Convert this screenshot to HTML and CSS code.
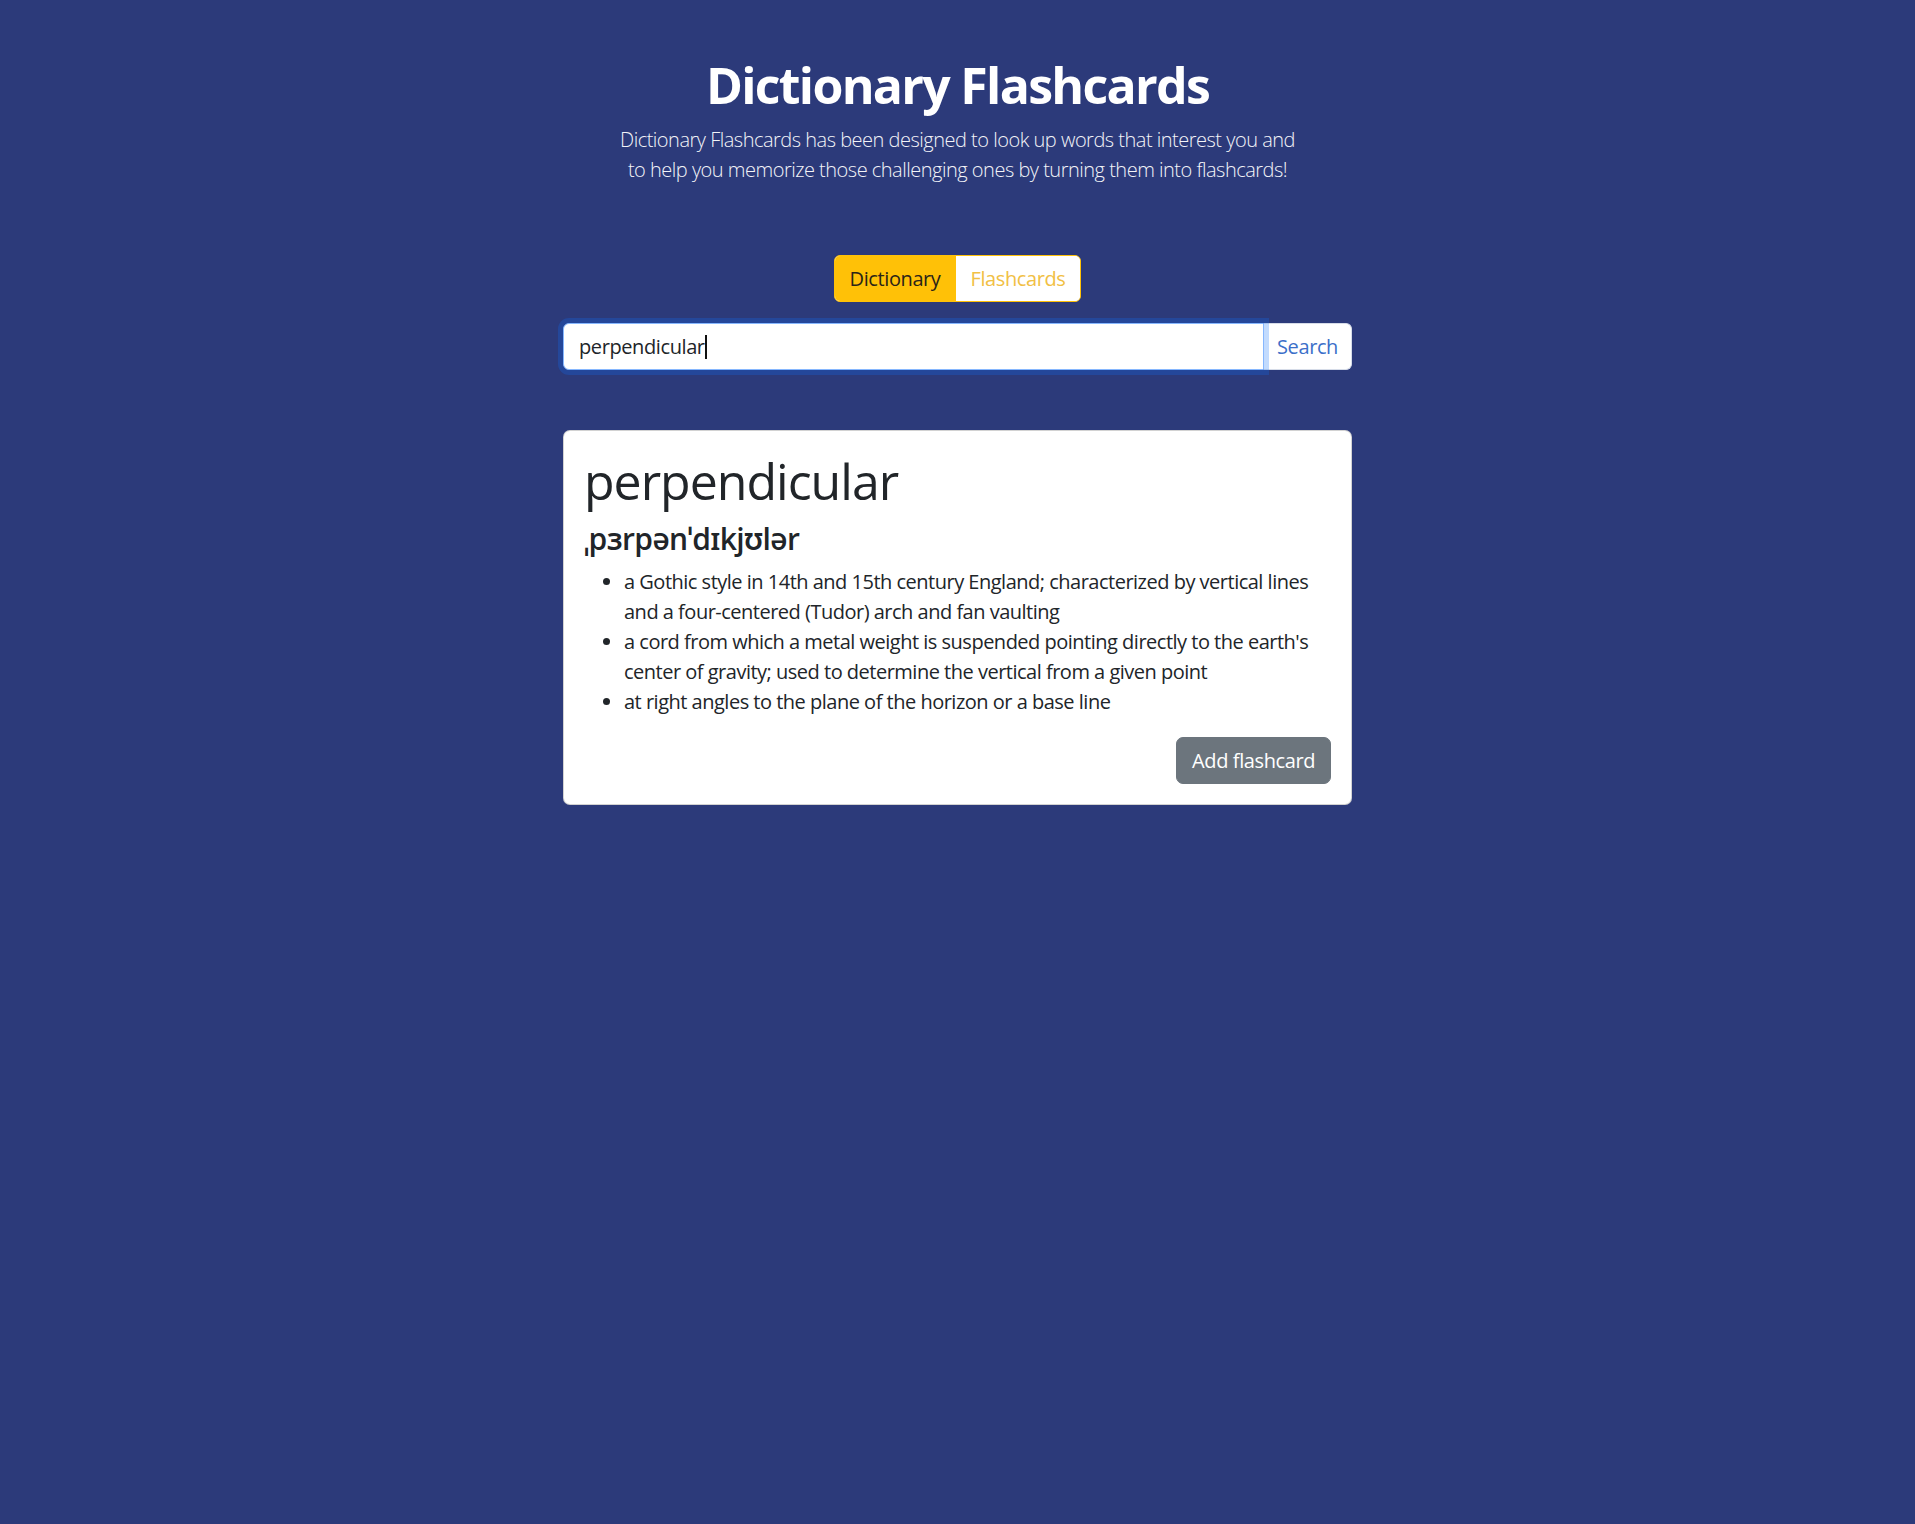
FILE: index.html
```html
<!DOCTYPE html>
<html lang="en">
<head>
<meta charset="utf-8">
<title>Dictionary Flashcards</title>
<link rel="stylesheet" href="styles.css">
</head>
<body>
<main class="app">
  <header class="hero">
    <h1 class="title">Dictionary Flashcards</h1>
    <p class="lead">Dictionary Flashcards has been designed to look up words that interest you and to help you memorize those challenging ones by turning them into flashcards!</p>
  </header>

  <div class="toggle-row">
    <div class="toggle">
      <button class="tab tab-active" type="button">Dictionary</button>
      <button class="tab" type="button">Flashcards</button>
    </div>
  </div>

  <form class="search">
    <div class="search-field"><span class="typed">perpendicular</span><span class="caret"></span></div>
    <button class="search-btn" type="button">Search</button>
  </form>

  <section class="card">
    <h2 class="word">perpendicular</h2>
    <h3 class="phon">ˌpɜrpənˈdɪkjʊlər</h3>
    <ul class="defs">
      <li>a Gothic style in 14th and 15th century England; characterized by vertical lines and a four-centered (Tudor) arch and fan vaulting</li>
      <li>a cord from which a metal weight is suspended pointing directly to the earth's center of gravity; used to determine the vertical from a given point</li>
      <li>at right angles to the plane of the horizon or a base line</li>
    </ul>
    <div class="actions">
      <button class="add-btn" type="button">Add flashcard</button>
    </div>
  </section>
</main>
</body>
</html>
```

FILE: styles.css
```css
* {
  box-sizing: border-box;
}

body {
  margin: 0;
  background: #2c3a7a;
  font-family: "Open Sans", "Noto Sans", "DejaVu Sans", sans-serif;
  color: #212529;
  min-height: 1524px;
}

.app {
  width: 789px;
  margin: 0 auto;
  padding-top: 55px;
}

.hero {
  text-align: center;
  color: #ffffff;
}

.title {
  margin: 0 0 10px;
  font-size: 50px;
  font-weight: 700;
  line-height: 60px;
  letter-spacing: -1.7px;
}

.lead {
  margin: 0 auto;
  width: 686px;
  font-size: 20px;
  font-weight: 300;
  line-height: 30px;
  color: #f3f4f8;
  letter-spacing: -0.5px;
}

.toggle-row {
  display: flex;
  justify-content: center;
  margin-top: 70px;
}

.toggle {
  display: flex;
  border: 1px solid #ffc107;
  border-radius: 6px;
  overflow: hidden;
  background: #ffffff;
}

.tab {
  font-family: inherit;
  font-size: 20px;
  line-height: 30px;
  padding: 7.5px 15px;
  border: 0;
  background: #ffffff;
  color: #f1c044;
  letter-spacing: -0.4px;
}

.tab-active {
  background: #ffc107;
  color: #2a2418;
}

.search {
  display: flex;
  margin: 21px 0 0;
}

.search-field {
  position: relative;
  z-index: 1;
  flex: 1;
  display: flex;
  align-items: center;
  height: 47px;
  padding: 0 15px;
  background: #ffffff;
  border: 1px solid #86b7fe;
  border-radius: 6px 0 0 6px;
  box-shadow: 0 0 0 5px rgba(13, 110, 253, 0.25);
  font-size: 20px;
  color: #212529;
  letter-spacing: -0.4px;
}

.caret {
  display: inline-block;
  width: 2px;
  height: 24px;
  background: #111111;
}

.search-btn {
  width: 88px;
  height: 47px;
  font-family: inherit;
  font-size: 20px;
  color: #3b6fc9;
  background: #ffffff;
  border: 1px solid #d6dce8;
  border-left: 0;
  border-radius: 0 6px 6px 0;
  letter-spacing: -0.4px;
}

.card {
  margin-top: 60px;
  padding: 20px;
  background: #ffffff;
  border: 1px solid rgba(0, 0, 0, 0.175);
  border-radius: 7px;
}

.word {
  margin: 0 0 10px;
  font-size: 50px;
  font-weight: 400;
  line-height: 60px;
  letter-spacing: -1px;
}

.phon {
  margin: 0 0 10px;
  font-size: 30px;
  font-weight: 600;
  line-height: 36px;
  letter-spacing: -0.6px;
}

.defs {
  margin: 0 0 20px;
  padding-left: 40px;
  font-size: 20px;
  line-height: 30px;
  letter-spacing: -0.5px;
}

.actions {
  display: flex;
  justify-content: flex-end;
}

.add-btn {
  font-family: inherit;
  font-size: 20px;
  line-height: 30px;
  padding: 7.5px 15px;
  color: #ffffff;
  background: #6c757d;
  border: 1px solid #6c757d;
  border-radius: 7px;
  letter-spacing: -0.4px;
}
```
